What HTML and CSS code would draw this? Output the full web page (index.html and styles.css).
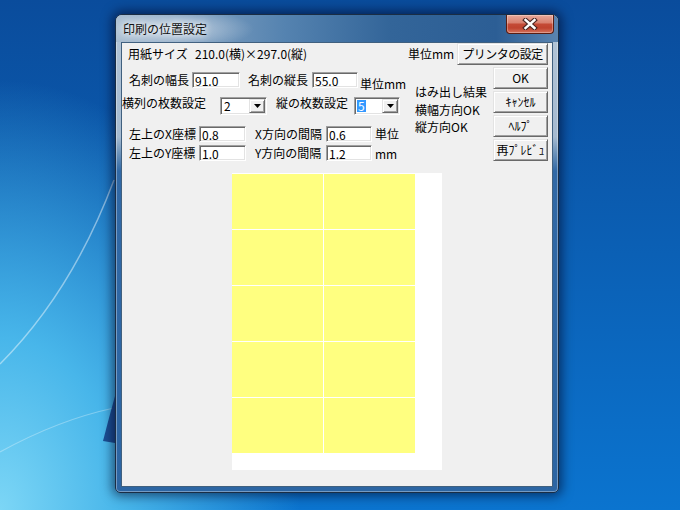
FILE: index.html
```html
<!DOCTYPE html>
<html lang="ja">
<head>
  <meta charset="UTF-8" />
  <meta name="viewport" content="width=device-width, initial-scale=1" />
  <title>印刷の位置設定</title>
  <link rel="stylesheet" href="styles.css">
</head>
<body>
  <div class="desktop">
    <svg class="wallpaper" width="680" height="510" viewBox="0 0 680 510">
      <path d="M114 180 Q72 292 0 364" fill="none" stroke="rgba(255,255,255,0.45)" stroke-width="1.5"/>
      <path d="M0 452 Q58 420 114 408" fill="none" stroke="rgba(255,255,255,0.3)" stroke-width="1.2"/>
      <polygon points="115,396 109,418 103,441 115,443" fill="#1b4f94"/>
    </svg>

    <div class="window">
      <div class="titlebar">
        <span class="title">印刷の位置設定</span>
        <button class="close-btn" title="閉じる">
          <svg width="16" height="12" viewBox="0 0 16 12">
            <path d="M3.5 2 L12.5 10 M12.5 2 L3.5 10" stroke="#4a2622" stroke-width="4.6" stroke-linecap="square"/>
            <path d="M3.5 2 L12.5 10 M12.5 2 L3.5 10" stroke="#fff" stroke-width="2.4" stroke-linecap="square"/>
          </svg>
        </button>
      </div>

      <div class="client">
        <div class="top">
          <div class="form">
            <div class="row row-paper">
              <span class="lbl lbl-paper">用紙サイズ</span>
              <span>210.0(横)×297.0(縦)</span>
            </div>

            <div class="row row-card">
              <span class="lbl lbl-card1">名刺の幅長</span>
              <input class="edit w48" type="text" value="91.0">
              <span class="lbl lbl-card2">名刺の縦長</span>
              <input class="edit w46" type="text" value="55.0">
              <span class="unit unit-low">単位mm</span>
            </div>

            <div class="row row-count">
              <span class="lbl lbl-count1">横列の枚数設定</span>
              <div class="combo w47">
                <span class="combo-text">2</span>
                <span class="drop"><svg width="7" height="4" viewBox="0 0 7 4"><path d="M0 0h7L3.5 4z"/></svg></span>
              </div>
              <span class="lbl lbl-count2">縦の枚数設定</span>
              <div class="combo w46">
                <span class="combo-text"><span class="sel">5</span></span>
                <span class="drop"><svg width="7" height="4" viewBox="0 0 7 4"><path d="M0 0h7L3.5 4z"/></svg></span>
              </div>
            </div>

            <div class="row row-pos">
              <span class="lbl lbl-pos1">左上のX座標</span>
              <input class="edit w47" type="text" value="0.8">
              <span class="lbl lbl-pos2">X方向の間隔</span>
              <input class="edit w46" type="text" value="0.6">
              <span class="unit unit-pos">単位</span>
            </div>

            <div class="row row-pos row-pos2">
              <span class="lbl lbl-pos1">左上のY座標</span>
              <input class="edit w47" type="text" value="1.0">
              <span class="lbl lbl-pos2">Y方向の間隔</span>
              <input class="edit w46" type="text" value="1.2">
              <span class="unit unit-pos unit-mm">mm</span>
            </div>
          </div>

          <div class="side">
            <div class="side-head">
              <span>単位mm</span>
              <button class="btn btn-printer">プリンタの設定</button>
            </div>
            <div class="side-body">
              <div class="result">
                <div>はみ出し結果</div>
                <div>横幅方向OK</div>
                <div>縦方向OK</div>
              </div>
              <div class="btn-col">
                <button class="btn">OK</button>
                <button class="btn">ｷｬﾝｾﾙ</button>
                <button class="btn">ﾍﾙﾌﾟ</button>
                <button class="btn">再ﾌﾟﾚﾋﾞｭ</button>
              </div>
            </div>
          </div>
        </div>

        <!-- preview: 1px = 1mm on A4 -->
        <div class="sheet">
          <div class="cards">
            <div class="card"></div><div class="card"></div>
            <div class="card"></div><div class="card"></div>
            <div class="card"></div><div class="card"></div>
            <div class="card"></div><div class="card"></div>
            <div class="card"></div><div class="card"></div>
          </div>
        </div>
      </div>
    </div>
  </div>
</body>
</html>
```

FILE: styles.css
```css
* {
  box-sizing: border-box;
}

html, body {
  margin: 0;
  padding: 0;
}

body {
  width: 680px;
  height: 510px;
  overflow: hidden;
  font-family: "Noto Sans CJK JP", sans-serif;
  font-size: 12px;
  color: #000;
}

/* Desktop */
.desktop {
  position: relative;
  width: 680px;
  height: 510px;
  overflow: hidden;
  background:
    radial-gradient(ellipse 300px 430px at 0 100%, #7cd6f6 0%, #48b6ea 40%, rgba(30, 140, 220, 0) 100%),
    linear-gradient(180deg, #0a4c9c 0%, #0b5cb0 40%, #0b74cf 100%);
}

.wallpaper {
  position: absolute;
  left: 0;
  top: 0;
}

/* Window frame */
.window {
  position: absolute;
  left: 115px;
  top: 14px;
  width: 444px;
  height: 479px;
  display: flex;
  flex-direction: column;
  padding: 0 5px 5px;
  border: 1px solid #1a2d44;
  border-radius: 7px 7px 5px 5px;
  background: linear-gradient(180deg, #b4c6d8 0, #a5bad0 122px, #6d93ba 138px, #3169a6 156px, #2c65a3 100%);
  box-shadow: 0 0 11px 3px rgba(0, 0, 30, 0.55), inset 0 0 0 1px rgba(255, 255, 255, 0.35);
}

.titlebar {
  position: relative;
  height: 27px;
  margin: 0 -5px;
  padding-left: 7px;
  display: flex;
  align-items: center;
  border-radius: 6px 6px 0 0;
  background:
    radial-gradient(ellipse 80px 20px at 58px 14px, rgba(255, 255, 255, 0.55), rgba(255, 255, 255, 0) 100%),
    linear-gradient(90deg, #a6bbcf 0%, #84a3c2 14%, #5583b0 38%, #336599 62%, #2c5e95 86%, #5a84b0 100%);
}

.title {
  font-size: 12px;
  line-height: 14px;
  color: #111;
  text-shadow: 0 0 6px #fff, 0 0 10px rgba(255, 255, 255, 0.8);
}

.close-btn {
  position: absolute;
  top: 0;
  right: 4px;
  width: 48px;
  height: 19px;
  padding: 0;
  display: flex;
  align-items: center;
  justify-content: center;
  border: 1px solid #5a1d12;
  border-top: none;
  border-radius: 0 0 4px 4px;
  background: linear-gradient(180deg, #e8a899 0%, #d98271 42%, #c44a36 52%, #bf432f 72%, #d5735d 100%);
  box-shadow: inset 0 0 0 1px rgba(255, 255, 255, 0.3);
}

/* Dialog client area */
.client {
  flex: 1;
  background: #f0f0f0;
  border: 1px solid #40607f;
}

.top {
  display: flex;
  height: 118px;
}

.form {
  width: 286px;
  display: flex;
  flex-direction: column;
}

.row {
  display: flex;
  align-items: center;
  line-height: 14px;
  white-space: nowrap;
}

.row-paper {
  height: 22px;
  padding-left: 6px;
}

.row-card {
  height: 16px;
  margin-top: 7px;
  padding-left: 7px;
}

.row-count {
  height: 18px;
  margin-top: 9px;
  align-items: flex-start;
}

.row-count .lbl {
  line-height: 12px;
}

.row-pos {
  height: 16px;
  margin-top: 11px;
  padding-left: 7px;
}

.row-pos2 {
  margin-top: 3px;
}

.lbl {
  flex: none;
}

.lbl-paper { width: 67px; }
.lbl-card1 { width: 63px; }
.lbl-card2 { width: 64px; margin-left: 8px; }
.lbl-count1 { width: 98px; }
.lbl-count2 { width: 78px; margin-left: 9px; }
.lbl-pos1 { width: 70px; }
.lbl-pos2 { width: 71px; margin-left: 9px; }

.unit-low {
  margin-left: 2px;
  align-self: flex-end;
  margin-bottom: -3px;
}

.unit-pos {
  margin-left: 3px;
}

.unit-mm {
  margin-top: 2px;
}

/* Edit boxes and combos, classic sunken look */
.edit, .combo {
  flex: none;
  background: #fff;
  border: 1px solid;
  border-color: #a0a0a0 #fff #fff #a0a0a0;
  box-shadow: inset 1px 1px 0 #696969, inset -1px -1px 0 #e3e3e3;
}

.edit {
  height: 16px;
  margin: 0;
  padding: 0 0 0 2px;
  font-family: "Noto Sans CJK JP", sans-serif;
  font-size: 12px;
  color: #000;
  outline: none;
}

.w46 { width: 46px; }
.w47 { width: 47px; }
.w48 { width: 48px; }

.combo {
  height: 18px;
  display: flex;
  align-items: center;
  padding: 1px;
}

.combo-text {
  padding-left: 2px;
  line-height: 12px;
}

.sel {
  display: inline-block;
  margin-left: -1px;
  padding: 0 1px;
  background: #3399ff;
  color: #fff;
  line-height: 12px;
}

.drop {
  margin-left: auto;
  width: 16px;
  height: 14px;
  display: flex;
  align-items: center;
  justify-content: center;
  background: #f0f0f0;
  border: 1px solid;
  border-color: #e3e3e3 #696969 #696969 #e3e3e3;
  box-shadow: inset 1px 1px 0 #fff, inset -1px -1px 0 #a0a0a0;
}

/* Right column */
.side {
  width: 140px;
  display: flex;
  flex-direction: column;
}

.side-head {
  height: 22px;
  display: flex;
  align-items: center;
  line-height: 14px;
}

.side-body {
  display: flex;
  margin-top: 2px;
}

.result {
  margin: 16px 0 0 7px;
  line-height: 17.5px;
  white-space: nowrap;
}

.btn-col {
  margin-left: auto;
  display: flex;
  flex-direction: column;
  gap: 2px;
}

.btn {
  width: 55px;
  height: 22px;
  padding: 0;
  font-family: "Noto Sans CJK JP", sans-serif;
  font-size: 12px;
  line-height: 14px;
  color: #000;
  background: #f0f0f0;
  border: 1px solid;
  border-color: #e3e3e3 #696969 #696969 #e3e3e3;
  box-shadow: inset 1px 1px 0 #fff, inset -1px -1px 0 #a0a0a0;
  white-space: nowrap;
}

.btn-printer {
  width: 91px;
  margin-left: auto;
  letter-spacing: -0.5px;
}

/* Print preview */
.sheet {
  width: 210px;
  height: 297px;
  margin: 12px auto 0;
  padding-top: 1px;
  background: #fff;
}

.cards {
  display: grid;
  grid-template-columns: 91px 91px;
  grid-auto-rows: 55px;
  gap: 1px;
}

.card {
  background: #ffff80;
}
```
